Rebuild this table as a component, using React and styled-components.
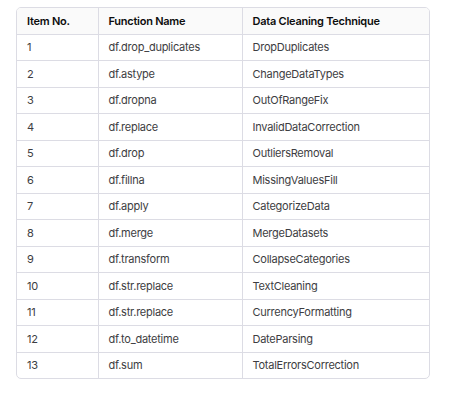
import React from "react";
import styled, { createGlobalStyle } from "styled-components";

const Global = createGlobalStyle`
  html, body { margin: 0; padding: 0; background: #ffffff; }
  body { font-family: Inter, "Noto Sans", sans-serif; }
`;

const Page = styled.div`
  width: 462px;
  height: 398px;
  padding: 7px 32px 0 16px;
  box-sizing: border-box;
`;

const Frame = styled.div`
  border: 1px solid #dcdce4;
  border-radius: 5px;
  overflow: hidden;
  width: 414px;
  box-sizing: border-box;
`;

const Table = styled.table`
  width: 100%;
  border-collapse: collapse;
  table-layout: fixed;
  font-size: 11px;
  letter-spacing: -0.25px;
`;

const Col = styled.col`
  width: ${(p) => p.$w}px;
`;

const Th = styled.th`
  text-align: left;
  font-weight: 600;
  color: #0d0d0d;
  background: #fafafa;
  padding: 0 10px;
  height: 25.5px;
  line-height: 14px;
  border-bottom: 1px solid #dcdce4;
  border-left: 1px solid #dcdce4;
  &:first-child { border-left: none; }
`;

const Td = styled.td`
  text-align: left;
  color: #3d3d42;
  padding: 0 10px;
  height: 25.5px;
  line-height: 14px;
  border-top: 1px solid #dcdce4;
  border-left: 1px solid #dcdce4;
  white-space: nowrap;
  &:first-child { border-left: none; }
`;

const Row = styled.tr`
  &:first-child td { border-top: none; }
`;

const data = [
  ["1", "df.drop_duplicates", "DropDuplicates"],
  ["2", "df.astype", "ChangeDataTypes"],
  ["3", "df.dropna", "OutOfRangeFix"],
  ["4", "df.replace", "InvalidDataCorrection"],
  ["5", "df.drop", "OutliersRemoval"],
  ["6", "df.fillna", "MissingValuesFill"],
  ["7", "df.apply", "CategorizeData"],
  ["8", "df.merge", "MergeDatasets"],
  ["9", "df.transform", "CollapseCategories"],
  ["10", "df.str.replace", "TextCleaning"],
  ["11", "df.str.replace", "CurrencyFormatting"],
  ["12", "df.to_datetime", "DateParsing"],
  ["13", "df.sum", "TotalErrorsCorrection"],
];

export default function App() {
  return (
    <>
      <Global />
      <Page>
        <Frame>
          <Table>
            <colgroup>
              <Col $w={81} />
              <Col $w={144} />
              <Col $w={187} />
            </colgroup>
            <thead>
              <tr>
                <Th>Item No.</Th>
                <Th>Function Name</Th>
                <Th>Data Cleaning Technique</Th>
              </tr>
            </thead>
            <tbody>
              {data.map((r) => (
                <Row key={r[0]}>
                  <Td>{r[0]}</Td>
                  <Td>{r[1]}</Td>
                  <Td>{r[2]}</Td>
                </Row>
              ))}
            </tbody>
          </Table>
        </Frame>
      </Page>
    </>
  );
}
